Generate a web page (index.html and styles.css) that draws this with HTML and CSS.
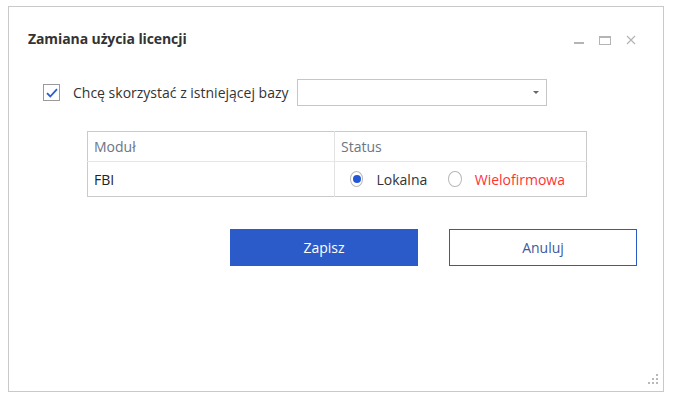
FILE: index.html
```html
<!DOCTYPE html>
<html lang="pl">

<head>
    <meta charset="utf-8">
    <title>Zamiana użycia licencji</title>
    <link rel="stylesheet" href="styles.css">
</head>

<body>
    <div class="okno">
        <div class="naglowek">
            <h1>Zamiana użycia licencji</h1>
            <div class="przyciski-okna">
                <span class="minimalizuj"></span>
                <span class="maksymalizuj"></span>
                <svg class="zamknij" width="10" height="10" viewBox="0 0 10 10">
                    <path d="M1 1L9 9M9 1L1 9" stroke="#b4b4b4" stroke-width="1.2" fill="none" />
                </svg>
            </div>
        </div>

        <div class="baza">
            <span class="checkbox">
                <svg width="12" height="10" viewBox="0 0 12 10">
                    <path d="M1 5.2L4.3 8.5L11 1.2" stroke="#2b5cd0" stroke-width="1.8" fill="none" />
                </svg>
            </span>
            <label>Chcę skorzystać z istniejącej bazy</label>
            <div class="combo"><span class="strzalka"></span></div>
        </div>

        <table class="moduly">
            <tr>
                <th class="kol1">Moduł</th>
                <th>Status</th>
            </tr>
            <tr>
                <td class="kol1">FBI</td>
                <td>
                    <div class="radia">
                        <span class="radio zaznaczone"></span>
                        <span class="opis">Lokalna</span>
                        <span class="radio"></span>
                        <span class="opis czerwony">Wielofirmowa</span>
                    </div>
                </td>
            </tr>
        </table>

        <div class="akcje">
            <button class="zapisz">Zapisz</button>
            <button class="anuluj">Anuluj</button>
        </div>

        <!-- uchwyt do zmiany rozmiaru -->
        <svg class="uchwyt" width="14" height="14" viewBox="0 0 14 14">
            <g fill="#b9b9b9">
                <rect x="11" y="1" width="2" height="2" />
                <rect x="7" y="5" width="2" height="2" />
                <rect x="11" y="5" width="2" height="2" />
                <rect x="3" y="9" width="2" height="2" />
                <rect x="7" y="9" width="2" height="2" />
                <rect x="11" y="9" width="2" height="2" />
            </g>
        </svg>
    </div>
</body>

</html>
```

FILE: styles.css
```css
* {
    margin: 0;
    padding: 0;
    box-sizing: border-box;
}

body {
    font-family: "Open Sans", "Noto Sans", sans-serif;
    background: white;
    color: #222;
}

/* Okno dialogu */
.okno {
    position: relative;
    margin: 6px 0 0 8px;
    width: 656px;
    height: 386px;
    border: 1px solid #c9c9c9;
}

.naglowek {
    display: flex;
    align-items: center;
    justify-content: space-between;
    height: 20px;
    margin-top: 21px;
    padding: 0 27px 0 19px;
}

h1 {
    font-size: 14px;
    font-weight: 700;
    color: #333;
    letter-spacing: -0.1px;
}

.przyciski-okna {
    display: flex;
    align-items: center;
    gap: 15px;
    margin-top: 4px;
}

.minimalizuj {
    display: block;
    width: 10px;
    height: 2px;
    background: #b4b4b4;
    margin-top: 6px;
}

.maksymalizuj {
    display: block;
    width: 12px;
    height: 9px;
    border: 1px solid #b4b4b4;
    border-top-width: 2px;
}

/* Wiersz z checkboxem */
.baza {
    display: flex;
    align-items: center;
    height: 27px;
    margin: 31px 0 0 34px;
    font-size: 14px;
}

.checkbox {
    display: flex;
    align-items: center;
    justify-content: center;
    width: 17px;
    height: 17px;
    border: 1px solid #9a9a9a;
    margin-right: 13px;
}

.baza label {
    color: #333;
    margin-right: 8px;
}

.combo {
    position: relative;
    width: 250px;
    height: 27px;
    border: 1px solid #c6c6c6;
}

.strzalka {
    position: absolute;
    right: 7px;
    top: 11px;
    border-left: 3px solid transparent;
    border-right: 3px solid transparent;
    border-top: 3px solid #666;
}

/* Tabela modułów */
.moduly {
    margin: 25px 0 0 78px;
    width: 500px;
    table-layout: fixed;
    border-collapse: collapse;
    border: 1px solid #cacaca;
    font-size: 14px;
}

.moduly th {
    height: 30px;
    text-align: left;
    font-weight: 400;
    color: #6b7684;
    padding-left: 6px;
    border-bottom: 1px solid #e6e6e6;
}

.moduly td {
    height: 35px;
    padding-left: 6px;
    color: #222;
}

.moduly .kol1 {
    width: 247px;
    border-right: 1px solid #e2e2e2;
}

.radia {
    display: flex;
    align-items: center;
    padding-left: 9px;
}

.radio {
    width: 16px;
    height: 16px;
    border-radius: 50%;
    border: 1px solid #b8b8b8;
    display: flex;
    align-items: center;
    justify-content: center;
}

.radio.zaznaczone::after {
    content: "";
    width: 8px;
    height: 8px;
    border-radius: 50%;
    background: #2357d6;
}

.opis {
    margin-left: 13px;
    margin-right: 21px;
    color: #333;
}

.czerwony {
    color: #ff3333;
}

/* Przyciski */
.akcje {
    display: flex;
    justify-content: flex-end;
    gap: 31px;
    margin-top: 32px;
    padding-right: 26px;
}

button {
    width: 188px;
    height: 37px;
    font-family: "Open Sans", "Noto Sans", sans-serif;
    font-size: 14px;
    border: 1px solid #2a5bc9;
}

.zapisz {
    background: #2a5bc9;
    color: white;
}

.anuluj {
    background: white;
    color: #3d5a9e;
}

.uchwyt {
    position: absolute;
    right: 4px;
    bottom: 4px;
}
```
